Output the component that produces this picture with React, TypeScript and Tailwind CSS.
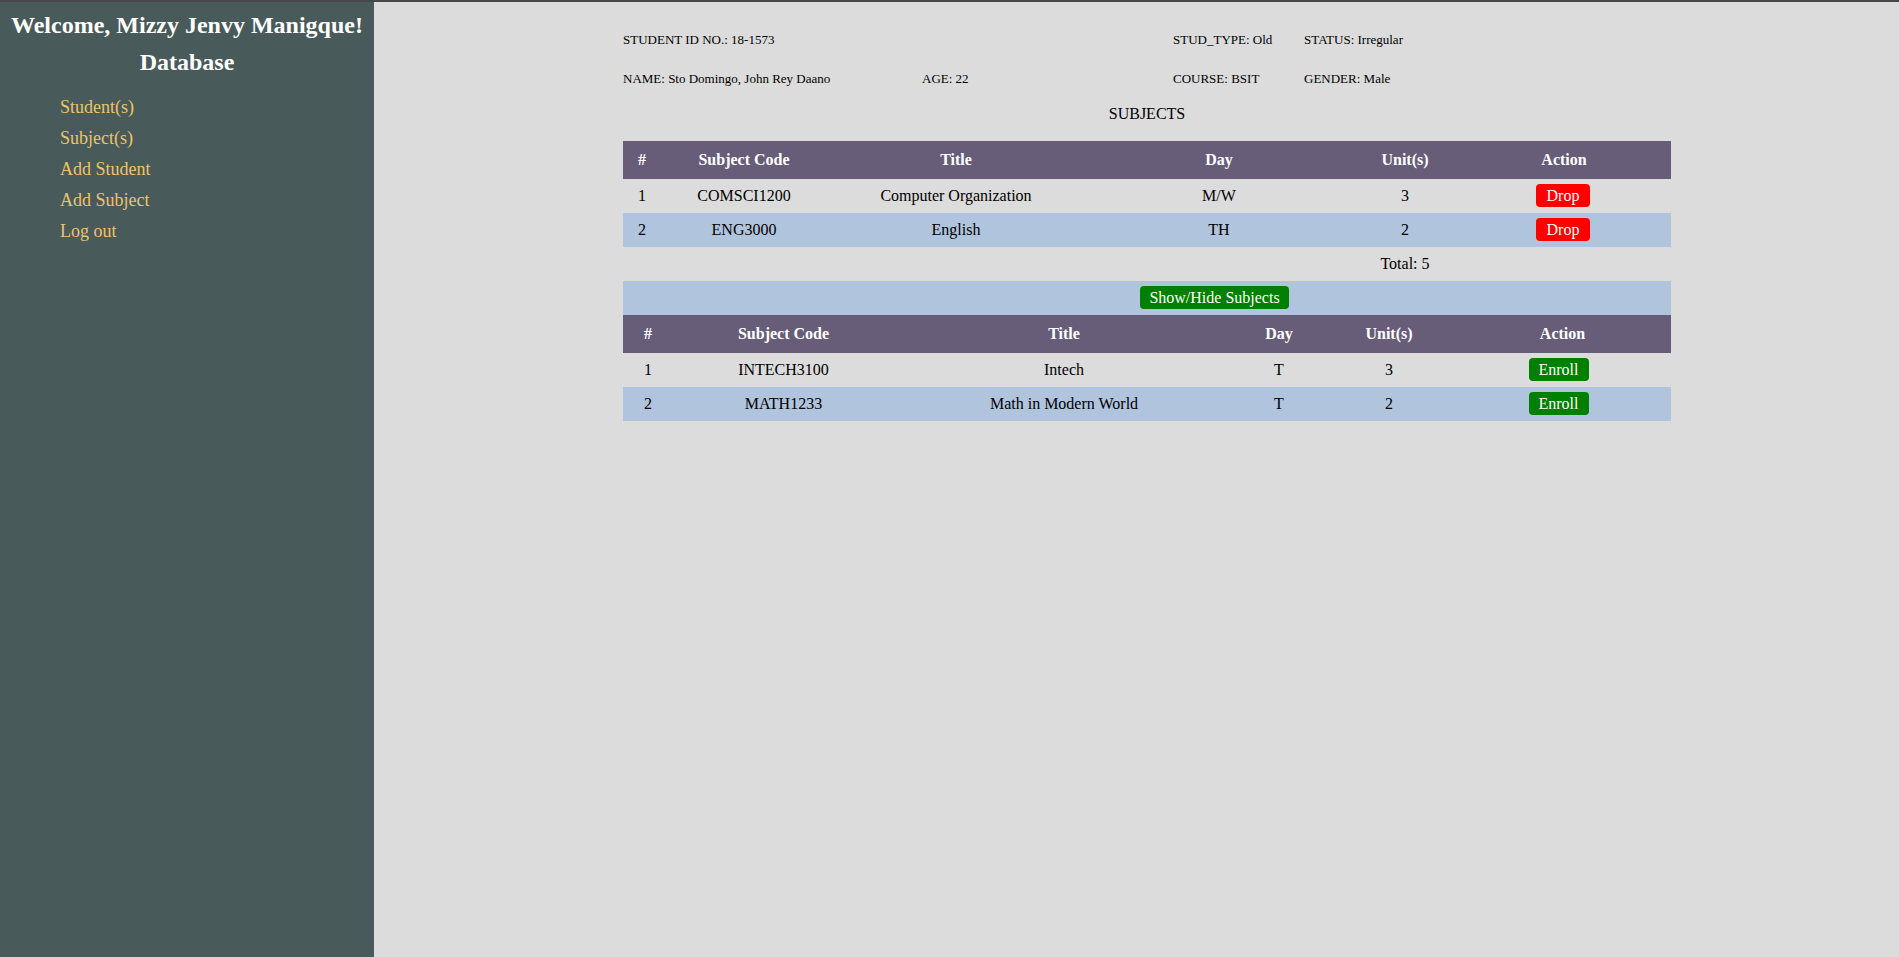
import React from 'react';

const NAV_LINKS = ['Student(s)', 'Subject(s)', 'Add Student', 'Add Subject', 'Log out'];

const ENROLLED = [
  { code: 'COMSCI1200', title: 'Computer Organization', day: 'M/W', units: 3 },
  { code: 'ENG3000', title: 'English', day: 'TH', units: 2 },
];

const AVAILABLE = [
  { code: 'INTECH3100', title: 'Intech', day: 'T', units: 3 },
  { code: 'MATH1233', title: 'Math in Modern World', day: 'T', units: 2 },
];

const serif = { fontFamily: '"Liberation Serif", "Times New Roman", serif' };

function Btn({
  color,
  children,
  className = 'px-[10px]',
}: {
  color: 'red' | 'green';
  children: React.ReactNode;
  className?: string;
}) {
  return (
    <button
      className={`inline-block h-[23px] leading-[23px] rounded-[4px] text-[16px] text-white ${className} ${
        color === 'red' ? 'bg-[#ff0000]' : 'bg-[#008000]'
      }`}>
      {children}
    </button>
  );
}

function Sidebar() {
  return (
    <aside className="w-[374px] shrink-0 bg-[#485a59] pt-[5px]">
      <h2 className="text-center text-[24px] font-bold text-white leading-[37px]">Welcome, Mizzy Jenvy Manigque!</h2>
      <h2 className="text-center text-[24px] font-bold text-white leading-[37px]">Database</h2>
      <nav className="mt-[11px]">
        {NAV_LINKS.map((l) => (
          <a key={l} href="#" className="block pl-[60px] h-[31px] leading-[31px] text-[18px] text-[#eec46a]">
            {l}
          </a>
        ))}
      </nav>
    </aside>
  );
}

function Info() {
  return (
    <div className="text-[13px] text-black">
      <div className="grid grid-cols-[299px_251px_131px_1fr] h-[39px] items-center">
        <span>STUDENT ID NO.: 18-1573</span>
        <span></span>
        <span>STUD_TYPE: Old</span>
        <span>STATUS: Irregular</span>
      </div>
      <div className="grid grid-cols-[299px_251px_131px_1fr] h-[39px] items-center">
        <span>NAME: Sto Domingo, John Rey Daano</span>
        <span>AGE: 22</span>
        <span>COURSE: BSIT</span>
        <span>GENDER: Male</span>
      </div>
      <div className="h-[32px] flex items-center justify-center text-[16px]">SUBJECTS</div>
    </div>
  );
}

const TH = 'h-[38px] p-0 text-center align-middle font-bold text-white';
const TD = 'h-[34px] p-0 text-center align-middle';

export default function App() {
  return (
    <div className="flex flex-col h-screen text-black" style={serif}>
      <div className="h-[2px] bg-[#484848] shrink-0" />
      <div className="flex flex-1 min-h-0">
        <Sidebar />
        <main className="flex-1 bg-[#dcdcdc] pt-[18px]">
          <div className="ml-[249px] w-[1048px]">
            <Info />
            <table className="mt-[11px] w-[1048px] table-fixed border-collapse text-[16px]">
              <colgroup>
                <col className="w-[38px]" />
                <col className="w-[166px]" />
                <col className="w-[258px]" />
                <col className="w-[268px]" />
                <col className="w-[104px]" />
                <col className="w-[214px]" />
              </colgroup>
              <thead>
                <tr className="bg-[#675d78]">
                  <th className={TH}>#</th>
                  <th className={TH}>Subject Code</th>
                  <th className={TH}>Title</th>
                  <th className={TH}>Day</th>
                  <th className={TH}>Unit(s)</th>
                  <th className={TH}>Action</th>
                </tr>
              </thead>
              <tbody>
                {ENROLLED.map((s, i) => (
                  <tr key={s.code} className={i % 2 === 1 ? 'bg-[#b0c4de]' : ''}>
                    <td className={TD}>{i + 1}</td>
                    <td className={TD}>{s.code}</td>
                    <td className={TD}>{s.title}</td>
                    <td className={TD}>{s.day}</td>
                    <td className={TD}>{s.units}</td>
                    <td className={TD}>
                      <Btn color="red" className="px-[11px] mr-[2px]">
                        Drop
                      </Btn>
                    </td>
                  </tr>
                ))}
                <tr>
                  <td className={TD}></td>
                  <td className={TD}></td>
                  <td className={TD}></td>
                  <td className={TD}></td>
                  <td className={TD}>Total: 5</td>
                  <td className={TD}></td>
                </tr>
                <tr className="bg-[#b0c4de]">
                  <td className={TD}></td>
                  <td className={TD}></td>
                  <td className={TD}></td>
                  <td className={TD}>
                    <Btn color="green" className="px-[9px] mr-[9px]">
                      Show/Hide Subjects
                    </Btn>
                  </td>
                  <td className={TD}></td>
                  <td className={TD}></td>
                </tr>
              </tbody>
            </table>
            <table className="w-[1048px] table-fixed border-collapse text-[16px]">
              <colgroup>
                <col className="w-[50px]" />
                <col className="w-[221px]" />
                <col className="w-[340px]" />
                <col className="w-[90px]" />
                <col className="w-[130px]" />
                <col className="w-[217px]" />
              </colgroup>
              <thead>
                <tr className="bg-[#675d78]">
                  <th className={TH}>#</th>
                  <th className={TH}>Subject Code</th>
                  <th className={TH}>Title</th>
                  <th className={TH}>Day</th>
                  <th className={TH}>Unit(s)</th>
                  <th className={TH}>Action</th>
                </tr>
              </thead>
              <tbody>
                {AVAILABLE.map((s, i) => (
                  <tr key={s.code} className={i % 2 === 1 ? 'bg-[#b0c4de]' : ''}>
                    <td className={TD}>{i + 1}</td>
                    <td className={TD}>{s.code}</td>
                    <td className={TD}>{s.title}</td>
                    <td className={TD}>{s.day}</td>
                    <td className={TD}>{s.units}</td>
                    <td className={TD}>
                      <Btn color="green" className="px-[10px] mr-[8px]">
                        Enroll
                      </Btn>
                    </td>
                  </tr>
                ))}
              </tbody>
            </table>
          </div>
        </main>
      </div>
    </div>
  );
}
